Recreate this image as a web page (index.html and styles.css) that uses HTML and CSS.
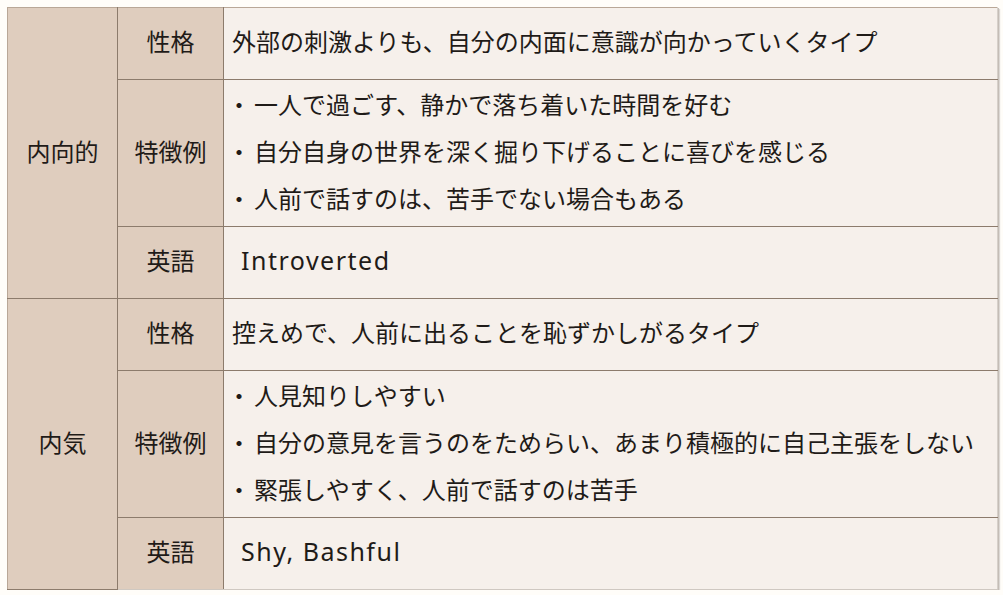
FILE: index.html
```html
<!DOCTYPE html>
<html lang="ja">
<head>
<meta charset="utf-8">
<title>内向的と内気</title>
<link rel="stylesheet" href="styles.css">
</head>
<body>
<table class="table">
  <colgroup>
    <col class="c-term">
    <col class="c-label">
    <col class="c-body">
  </colgroup>
  <tbody>
    <tr class="r-short">
      <th class="term" rowspan="3">内向的</th>
      <th class="label">性格</th>
      <td class="body">外部の刺激よりも、自分の内面に意識が向かっていくタイプ</td>
    </tr>
    <tr class="r-tall">
      <th class="label">特徴例</th>
      <td class="body list">
        <div class="item"><span class="bullet">・</span>一人で過ごす、静かで落ち着いた時間を好む</div>
        <div class="item"><span class="bullet">・</span>自分自身の世界を深く掘り下げることに喜びを感じる</div>
        <div class="item"><span class="bullet">・</span>人前で話すのは、苦手でない場合もある</div>
      </td>
    </tr>
    <tr class="r-short">
      <th class="label">英語</th>
      <td class="body en">Introverted</td>
    </tr>
    <tr class="r-short group-start">
      <th class="term" rowspan="3">内気</th>
      <th class="label">性格</th>
      <td class="body">控えめで、人前に出ることを恥ずかしがるタイプ</td>
    </tr>
    <tr class="r-tall">
      <th class="label">特徴例</th>
      <td class="body list">
        <div class="item"><span class="bullet">・</span>人見知りしやすい</div>
        <div class="item"><span class="bullet">・</span>自分の意見を言うのをためらい、あまり積極的に自己主張をしない</div>
        <div class="item"><span class="bullet">・</span>緊張しやすく、人前で話すのは苦手</div>
      </td>
    </tr>
    <tr class="r-short">
      <th class="label">英語</th>
      <td class="body en">Shy, Bashful</td>
    </tr>
  </tbody>
</table>
</body>
</html>
```

FILE: styles.css
```css
html, body {
  margin: 0;
  padding: 0;
  background: #fffdf9;
}

body {
  padding: 7px 0 0 7px;
  font-family: "Noto Sans CJK JP", "Noto Sans", sans-serif;
  color: #1f1b18;
}

.table {
  border-collapse: collapse;
  width: 990px;
  table-layout: fixed;
  box-shadow: 1px 1px 0 #c4bdb6, 2px 2px 1px #dcd8d4;
  font-size: 24px;
}

.c-term { width: 110px; }
.c-label { width: 106px; }
.c-body { width: 774px; }

.table th,
.table td {
  border: 1px solid #8c7b6c;
  padding: 0 0 5px 0;
  vertical-align: middle;
  font-weight: 400;
  white-space: nowrap;
}

.table tr:first-child th,
.table tr:first-child td {
  border-top-color: #b9a797;
}

.table th.term {
  border-left-color: #b9a797;
}

.table td.body {
  border-right-color: #d6d0ca;
}

.table tr:last-child th,
.table tr:last-child td {
  border-bottom-color: #cfc8c1;
}

.r-short { height: 72px; }
.r-tall { height: 146px; }

.term,
.label {
  background: #dfcdbe;
  text-align: center;
  line-height: 32px;
}

.table td.body {
  background: #f6f0eb;
  text-align: left;
  padding-left: 8px;
  line-height: 32px;
}

.table td.list {
  line-height: 47px;
}

.item {
  display: block;
}

.bullet {
  display: inline-block;
  width: 24px;
  margin-left: -5px;
  margin-right: 3px;
  text-align: center;
}

.table td.en {
  font-family: "Noto Sans", "Noto Sans CJK JP", sans-serif;
  font-size: 25px;
  letter-spacing: 1.5px;
  padding-left: 17px;
}
```
